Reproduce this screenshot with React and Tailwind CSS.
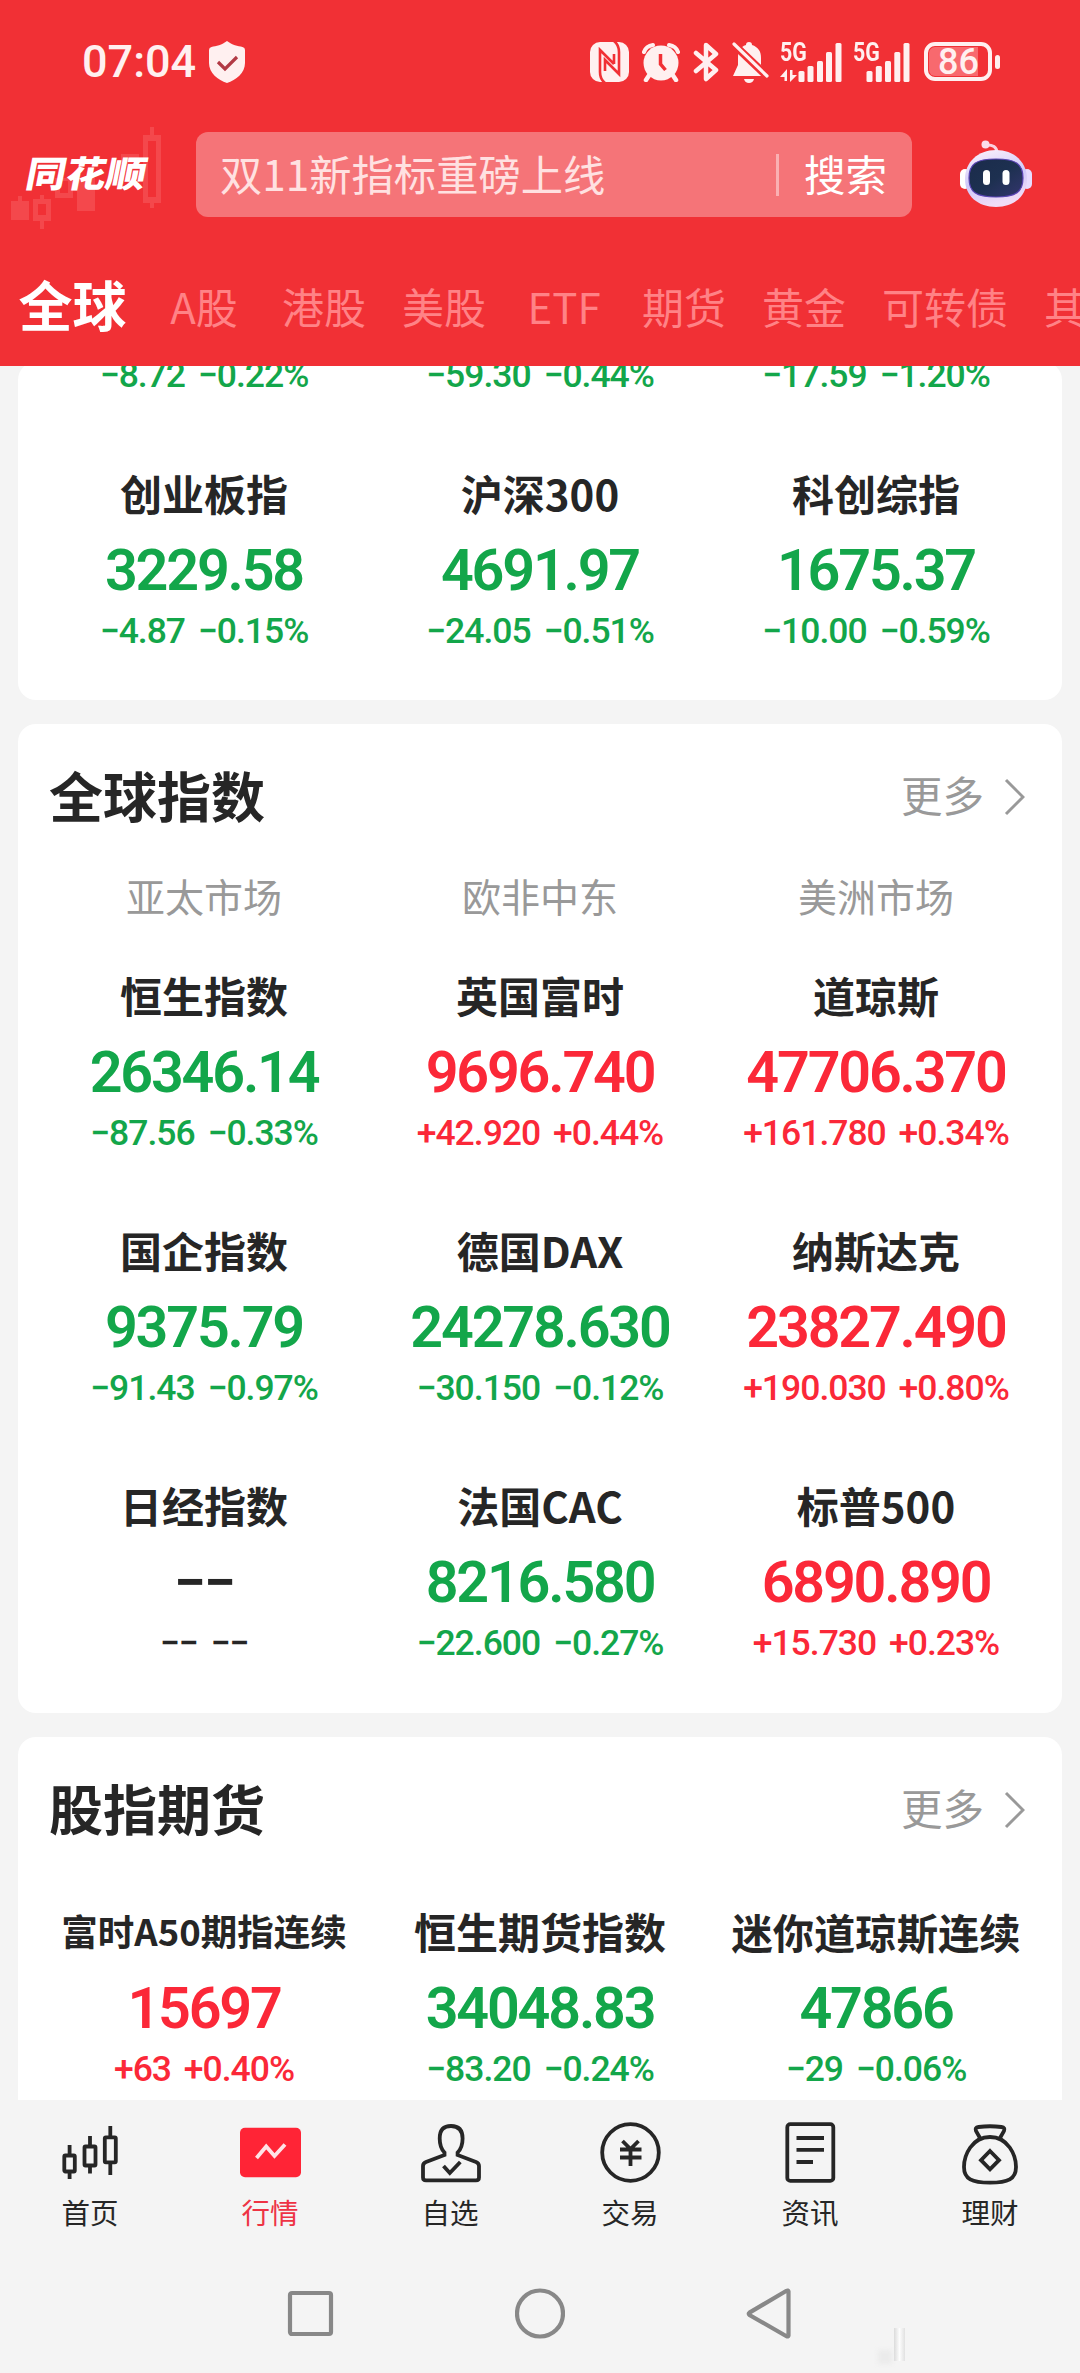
const tabs = ["全球", "A股", "港股", "美股", "ETF", "期货", "黄金", "可转债", "其他"];

const cnChanges = ["−8.72 −0.22%", "−59.30 −0.44%", "−17.59 −1.20%"];

const cnIndexes = [
  { name: "创业板指", value: "3229.58", change: "−4.87 −0.15%", dir: "down" },
  { name: "沪深300", value: "4691.97", change: "−24.05 −0.51%", dir: "down" },
  { name: "科创综指", value: "1675.37", change: "−10.00 −0.59%", dir: "down" },
];

const globalIndexes = [
  { name: "恒生指数", value: "26346.14", change: "−87.56 −0.33%", dir: "down" },
  { name: "英国富时", value: "9696.740", change: "+42.920 +0.44%", dir: "up" },
  { name: "道琼斯", value: "47706.370", change: "+161.780 +0.34%", dir: "up" },
  { name: "国企指数", value: "9375.79", change: "−91.43 −0.97%", dir: "down" },
  { name: "德国DAX", value: "24278.630", change: "−30.150 −0.12%", dir: "down" },
  { name: "纳斯达克", value: "23827.490", change: "+190.030 +0.80%", dir: "up" },
  { name: "日经指数", value: "−−", change: "−− −−", dir: "flat" },
  { name: "法国CAC", value: "8216.580", change: "−22.600 −0.27%", dir: "down" },
  { name: "标普500", value: "6890.890", change: "+15.730 +0.23%", dir: "up" },
];

const futures = [
  { name: "富时A50期指连续", value: "15697", change: "+63 +0.40%", dir: "up", size: "text-[36.500px]" },
  { name: "恒生期货指数", value: "34048.83", change: "−83.20 −0.24%", dir: "down" },
  { name: "迷你道琼斯连续", value: "47866", change: "−29 −0.06%", dir: "down", size: "text-[41.300px]" },
];

const colors = {
  up: "text-[#fb2838]",
  down: "text-[#13a64a]",
  flat: "text-[#262626]",
};

function Change({ dir, children }) {
  return (
    <p
      className={`font-['Roboto'] text-[35.500px] font-medium leading-[26px] tracking-[-1px] [word-spacing:5px] ${colors[dir]}`}
    >
      {children}
    </p>
  );
}

function Quote({ item }) {
  return (
    <div className="whitespace-nowrap text-center">
      <h3 className={`mb-[3px] font-bold leading-[56px] ${item.size || "text-[42px]"}`}>{item.name}</h3>
      <p
        className={`font-['Roboto'] text-[57.500px] font-semibold leading-[94px] tracking-[-2.200px] ${colors[item.dir]}`}
      >
        {item.value}
      </p>
      <Change dir={item.dir}>{item.change}</Change>
    </div>
  );
}

function QuoteGrid({ items }) {
  return (
    <div className="grid grid-cols-3 gap-y-[76px]">
      {items.map((item) => (
        <Quote key={item.name} item={item} />
      ))}
    </div>
  );
}

function SectionTitle({ children }) {
  return (
    <div className="flex h-[142px] items-center justify-between pl-[13px] pr-[19px]">
      <h2 className="text-[54px] font-bold leading-none">{children}</h2>
      <div className="flex items-center gap-[20px] text-[#999]">
        <span className="text-[41.500px] leading-none">更多</span>
        <svg className="mt-[3px]" width="21" height="38" viewBox="0 0 21 38" fill="none" stroke="currentColor" strokeWidth="3">
          <path d="M2 2l17 17L2 36" />
        </svg>
      </div>
    </div>
  );
}

function SignalBars({ data }) {
  return (
    <div className="relative h-[40px]">
      {data ? (
        <svg width="62" height="40" viewBox="0 0 62 40" fill="currentColor">
          <path d="M0 35l7-8v12H4.500v-4zM17 33l-7 7V28h2.500v5z" />
          <rect x="18.500" y="29" width="6" height="11" rx="1.500" />
          <rect x="27.500" y="24" width="6" height="16" rx="1.500" />
          <rect x="37" y="19" width="6" height="21" rx="1.500" />
          <rect x="46" y="10" width="6" height="30" rx="1.500" />
          <rect x="55.500" y="1" width="6" height="39" rx="1.500" />
        </svg>
      ) : (
        <svg width="57" height="40" viewBox="0 0 57 40" fill="currentColor">
          <rect x="13.500" y="29" width="6" height="11" rx="1.500" />
          <rect x="22.800" y="24" width="6" height="16" rx="1.500" />
          <rect x="32" y="19" width="6" height="21" rx="1.500" />
          <rect x="41.300" y="10" width="6" height="30" rx="1.500" />
          <rect x="50.500" y="1" width="6" height="39" rx="1.500" />
        </svg>
      )}
      <span className="absolute -top-[4px] left-0 origin-left scale-x-[0.82] font-['Roboto'] text-[26px] font-bold leading-[28px]">
        5G
      </span>
    </div>
  );
}

function StatusBar() {
  return (
    <div className="flex h-[123px] items-center pl-[82px] pr-[80px] text-[#fff0f0]">
      <span className="font-['Roboto'] text-[45px] font-medium leading-none">07:04</span>
      <svg className="ml-[12px]" width="38" height="44" viewBox="0 0 38 44">
        <path
          d="M19 1c5 4 11 5 15.500 6q2.500.6 2.500 3v13c0 10-9 17-18 20C10 40 1 33 1 23V10q0-2.400 2.500-3C8 6 14 5 19 1z"
          fill="currentColor"
        />
        <path d="M10 22l7 7 12-12" fill="none" stroke="#b23a45" strokeWidth="3.200" />
      </svg>

      <div className="ml-auto flex items-center">
        <svg width="39" height="40" viewBox="0 0 39 40">
          <rect width="39" height="40" rx="10" fill="currentColor" />
          <path
            d="M15 41Q10 37 10 30V8L24 22M24 -1Q29 3 29 10V32L15 18V29M24 22V12"
            fill="none"
            stroke="#f13035"
            strokeWidth="2.600"
          />
        </svg>
        <svg className="ml-[13px]" width="38" height="40" viewBox="0 0 38 40">
          <path d="M8 32l-4 6M30 32l4 6" stroke="currentColor" strokeWidth="4.500" strokeLinecap="round" />
          <path d="M2 10Q4 4 11 3M36 10Q34 4 27 3" fill="none" stroke="currentColor" strokeWidth="4" strokeLinecap="round" />
          <circle cx="19" cy="21" r="17.500" fill="currentColor" />
          <path d="M18.500 12v10l5 6" fill="none" stroke="#f13035" strokeWidth="3.500" />
        </svg>
        <svg className="ml-[13px]" width="28" height="40" viewBox="0 0 28 40">
          <path
            d="M3 11l20 17-10 9V3l10 9L3 29"
            fill="none"
            stroke="currentColor"
            strokeWidth="4.500"
            strokeLinejoin="round"
            strokeLinecap="round"
          />
        </svg>
        <svg className="ml-[11px]" width="37" height="42" viewBox="0 0 37 42">
          <path
            d="M17 1q3 0 3 3c6 2 9 6 9 13v7l5 11H1l5-11v-7C6 10 8 6 14 4q0-3 3-3zM12 38h10q-1 4-5 4t-5-4z"
            fill="currentColor"
          />
          <path d="M-3 -1l40 38" stroke="#f13035" strokeWidth="8" />
          <path d="M2 3l33 32" stroke="currentColor" strokeWidth="3.200" strokeLinecap="round" />
        </svg>
        <div className="ml-[11px] flex gap-[11px]">
          <SignalBars data />
          <SignalBars />
        </div>
        <div className="ml-[14px] flex items-center gap-[3px]">
          <div className="flex h-[39px] w-[68px] rounded-[11px] border-4 border-current p-px">
            <div className="flex h-full w-[49px] items-center justify-center rounded-l-[6px] bg-[#f8696e] pl-[10px] font-['Roboto'] text-[36px] font-medium leading-none">
              86
            </div>
          </div>
          <div className="h-[14px] w-[5px] rounded-sm bg-current" />
        </div>
      </div>
    </div>
  );
}

function Logo() {
  return (
    <div className="relative h-[106px] w-[196px]">
      <svg className="absolute left-0 top-0" width="170" height="106" viewBox="0 0 170 106" fill="#f4484c">
        <path d="M11 78h18v19H11zM18 73h4v5h-4z" />
        <path d="M33 76h18v22H33zM38 81v11h8V81z" fillRule="evenodd" />
        <path d="M40 72h4v4h-4zM40 98h4v8h-4z" />
        <path d="M55 55h18v20H55zM60 58v12h8V58z" fillRule="evenodd" />
        <path d="M77 55h18v33H77z" />
        <path d="M121 31h18v10h-18z" />
        <path d="M143 12h18v68h-18zM148 18v56h8V18z" fillRule="evenodd" />
        <path d="M150 4h4v8h-4zM150 80h4v5h-4z" />
      </svg>
      <div className="absolute left-[27px] top-[29px] origin-center -skew-x-[10deg] scale-y-[0.9] whitespace-nowrap text-[40px] font-black leading-[40px]">
        同花顺
      </div>
    </div>
  );
}

function Robot() {
  return (
    <svg className="ml-[48px] -mt-[4px]" width="72" height="70" viewBox="0 0 72 70">
      <defs>
        <linearGradient id="shell" x1="0" y1="0" x2="0.300" y2="1">
          <stop offset="0" stopColor="#fff3fb" />
          <stop offset="0.600" stopColor="#cfc8fa" />
          <stop offset="1" stopColor="#f0dcf6" />
        </linearGradient>
        <linearGradient id="face" x1="0" y1="0" x2="1" y2="1">
          <stop offset="0" stopColor="#1b2b4b" />
          <stop offset="0.500" stopColor="#1d3050" />
          <stop offset="1" stopColor="#34366e" />
        </linearGradient>
      </defs>
      <path d="M25 6q12-1 12 8" fill="none" stroke="#fbd0de" strokeWidth="3" />
      <circle cx="25.500" cy="5.500" r="4" fill="#fbdcea" />
      <rect x="0" y="30" width="10" height="20" rx="5" fill="#fff" />
      <rect x="62" y="30" width="10" height="20" rx="5" fill="#e7dcff" />
      <path d="M36 11c18 0 31 12 31 29S54 68 36 68 5 57 5 40s13-29 31-29z" fill="url(#shell)" />
      <path
        d="M36 20c20 0 27 5 27 19S56 58 36 58 9 53 9 39s7-19 27-19z"
        fill="url(#face)"
        stroke="#5b45b5"
        strokeWidth="1.200"
      />
      <rect x="23" y="31" width="7" height="15" rx="3.500" fill="#fff" />
      <rect x="42.500" y="31" width="7" height="15" rx="3.500" fill="#fff" />
    </svg>
  );
}

function Header() {
  return (
    <header className="h-[366px] shrink-0 overflow-hidden bg-[#f13035] text-white">
      <StatusBar />
      <div className="flex h-[106px] items-center">
        <Logo />
        <div className="-mt-[3px] flex h-[85px] w-[716px] items-center rounded-xl bg-[#f57478] pb-[2px] pl-[24px] text-[42.300px] leading-none">
          <span className="text-[#ffe1e1]">双11新指标重磅上线</span>
          <span className="ml-auto mt-[3px] h-[42px] w-[3px] bg-[#fab0b2]" />
          <span className="ml-[25px] mr-[25px] text-[41.500px]">搜索</span>
        </div>
        <Robot />
      </div>
      <nav className="flex h-[137px] pt-[20px] leading-[110px] whitespace-nowrap text-[42px] text-[#ff8286]">
        {tabs.map((tab, i) => (
          <span
            key={tab}
            className={
              i === 0
                ? "w-[144px] shrink-0 pl-px text-center text-[54px] font-bold text-white"
                : "min-w-[120px] shrink-0 px-[18px] pt-[2px] text-center"
            }
          >
            {tab}
          </span>
        ))}
      </nav>
    </header>
  );
}

const menu = [
  {
    label: "首页",
    icon: (
      <>
        <rect x="6.300" y="30.500" width="10.500" height="16" rx="1" />
        <rect x="26.500" y="21.500" width="11" height="19" rx="1" />
        <rect x="46.800" y="12.300" width="11" height="25" rx="1" />
        <path d="M11.600 20v10M11.600 47v7M32 11v10M32 41v7.500M52.300 1v11M52.300 38v12" />
      </>
    ),
  },
  {
    label: "行情",
    active: true,
    icon: (
      <>
        <rect x="2" y="2.700" width="61" height="49.600" rx="5" fill="#ff2436" stroke="none" />
        <path d="M18.500 33L28.200 21.500 36.500 31 47 19.500" stroke="#ffe3e6" strokeWidth="3.800" />
      </>
    ),
  },
  {
    label: "自选",
    icon: (
      <>
        <path d="M26.500 27.500C23 24 21.700 20 21.700 13.500 21.700 4.500 26 1 33 1s11.600 3.500 11.600 12.500c0 6.500-1.400 10.500-5 14v2.500l18.400 7q3 1.200 3 4v11.500q0 2.800-3 2.800H8q-3 0-3-2.800V41q0-2.800 3-4l18.500-7z" />
        <path d="M25.500 41l6.300 7 10.500-11" />
      </>
    ),
  },
  {
    label: "交易",
    icon: (
      <>
        <circle cx="32.500" cy="27.500" r="28.300" />
        <path d="M24.500 16l8 8 8-8M22 24.500h21.500M22 32.500h21.500M32.500 24v17" />
      </>
    ),
  },
  {
    label: "资讯",
    icon: (
      <>
        <rect x="9.300" y="-0.800" width="46" height="56.700" rx="3" />
        <path d="M18.500 13H46M18.500 24.800H46M18.500 37H35" />
      </>
    ),
  },
  {
    label: "理财",
    icon: (
      <>
        <path d="M22 13l-4-7q-1.500-3.500 2.500-4Q32 0.500 43.500 2q4 .5 2.500 4l-4 7" />
        <path d="M32 12C14 12 6 30 6 42c0 12 8 15.700 26 15.700S58 54 58 42C58 30 50 12 32 12z" />
        <path d="M32 26l9 9.200-9 9.200-9-9.200z" />
      </>
    ),
  },
];

function TabBar() {
  return (
    <nav className="grid shrink-0 grid-cols-6 pt-[20px]">
      {menu.map((item) => (
        <div key={item.label} className="flex flex-col items-center">
          <svg width="64" height="68" viewBox="0 -5 64 68" fill="none" stroke="#262626" strokeWidth="3.800">
            {item.icon}
          </svg>
          <span
            className={`mb-[2px] text-[28.500px] leading-[48px] ${item.active ? "text-[#ee3344]" : "text-[#262626]"}`}
          >
            {item.label}
          </span>
        </div>
      ))}
    </nav>
  );
}

function SystemNav() {
  return (
    <div className="relative flex grow items-start justify-center gap-[180px] pt-[50px]">
      {[
        <rect key="r" x="5" y="5" width="41" height="41" rx="2" />,
        <circle key="c" cx="25" cy="25.500" r="23" />,
        <path key="p" d="M43.500 3.500v44q-.5 1.500-2 .7L4.500 27q-1.600-1.200 0-2.400L41.500 2.800q1.500-.8 2 .7z" />,
      ].map((shape) => (
        <svg key={shape.key} width="50" height="51" viewBox="0 0 50 51" fill="none" stroke="#888" strokeWidth="4.200">
          {shape}
        </svg>
      ))}
      <div className="absolute bottom-[12px] left-[894px] h-[33px] w-[11px] bg-linear-to-r from-[#d5d5d5] via-white to-[#dcdcdc] opacity-80" />
      <div className="absolute bottom-[9px] left-[878px] h-[14px] w-[14px] bg-[#ebebeb] blur-[2px]" />
    </div>
  );
}

export default function App() {
  return (
    <div className="flex h-[2373px] w-[1080px] flex-col overflow-hidden bg-[#f4f4f4] font-['Noto_Sans_CJK_SC',sans-serif] text-[#262626]">
      <Header />
      <main className="flex h-[1734px] shrink-0 flex-col gap-6 overflow-hidden px-[18px]">
        <section className="-mt-[4px] h-[338px] shrink-0 rounded-[18px] bg-white px-[18px]">
          <div className="mb-[77px] grid grid-cols-3 text-center">
            {cnChanges.map((text) => (
              <Change key={text} dir="down">
                {text}
              </Change>
            ))}
          </div>
          <QuoteGrid items={cnIndexes} />
        </section>

        <section className="h-[989px] shrink-0 rounded-[18px] bg-white px-[18px]">
          <SectionTitle>全球指数</SectionTitle>
          <div className="mb-[43px] grid grid-cols-3 text-center text-[39px] leading-[58px] text-[#999]">
            <span>亚太市场</span>
            <span>欧非中东</span>
            <span>美洲市场</span>
          </div>
          <QuoteGrid items={globalIndexes} />
        </section>

        <section className="h-[400px] shrink-0 rounded-[18px] bg-white px-[18px]">
          <SectionTitle>股指期货</SectionTitle>
          <div className="pt-[24px]">
            <QuoteGrid items={futures} />
          </div>
        </section>
      </main>
      <TabBar />
      <SystemNav />
    </div>
  );
}
